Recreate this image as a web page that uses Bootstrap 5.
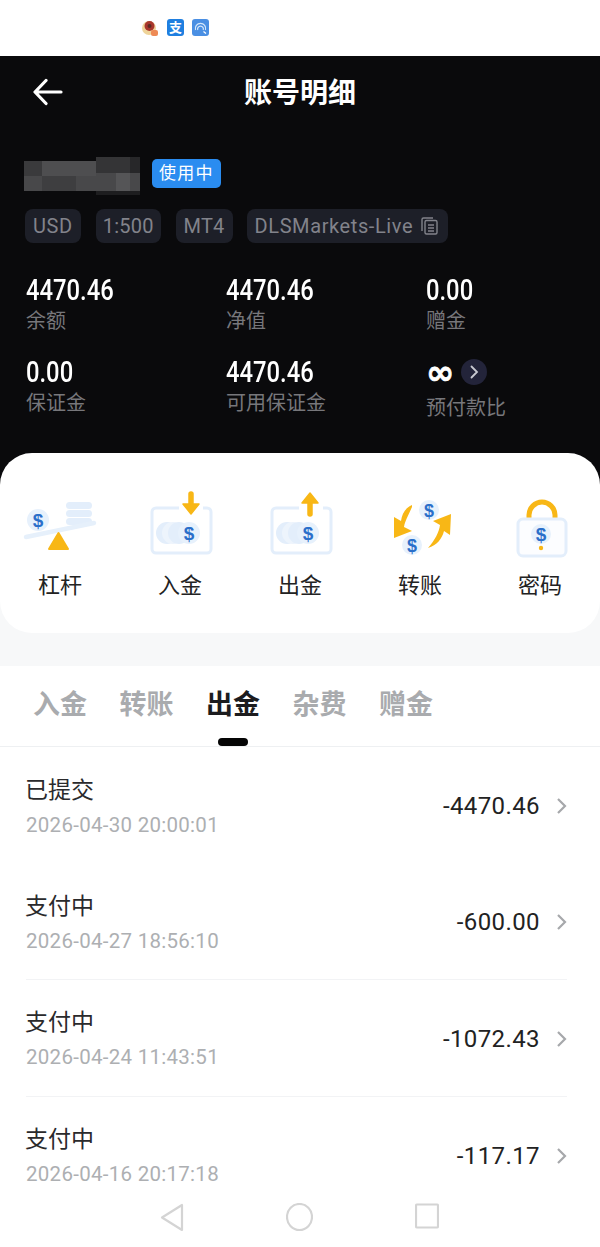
<!DOCTYPE html>
<html lang="zh-CN">
<head>
    <meta charset="UTF-8">
    <meta name="viewport" content="width=device-width, initial-scale=1.0">
    <title>账号明细</title>
    <link rel="stylesheet" href="https://cdn.jsdelivr.net/npm/bootstrap@5.3.0/dist/css/bootstrap.min.css">
    <style>
        html, body { height: 1247px; overflow: hidden; }
        body { font-family: Roboto, "Noto Sans CJK SC", sans-serif; background: #fff; color: #222; }
        svg { display: block; flex: none; }

        .status-strip { height: 56px; padding: 19px 0 0 142px; gap: 8px; }
        .alipay-box { width: 17px; height: 17px; border-radius: 3px; background: #1f7fe0; color: #fff; font-size: 13px; line-height: 17px; text-align: center; font-weight: 700; }

        .dark-top { height: 429px; background: #0a0a0c; color: #fff; }
        .title-bar { height: 72px; padding: 0 33px; }
        .title-bar h1 { font-size: 28px; font-weight: 700; margin: 4px 0 0; }
        .bar-side { width: 30px; }
        .name-line { height: 38px; margin: 29px 0 0 24px; gap: 12px; }
        .name-blur { filter: blur(.7px); }
        .state-tag { margin-top: 2px; height: 29px; padding: 0 7px; border-radius: 5px; background: #2a8cf0; font-size: 17px; line-height: 29px; letter-spacing: 1.2px; }
        .chip-line { margin: 14px 0 0 25px; gap: 15px; }
        .info-chip { height: 34px; padding: 0 7px; border-radius: 8px; background: #1d1f28; color: #82838b; font-size: 20px; line-height: 34px; letter-spacing: .2px; gap: 8px; }
        .chip-usd { padding: 0 8px; letter-spacing: .6px; }
        .chip-mt { padding: 0 8px; }
        .chip-wide { padding: 0 10px 0 8px; letter-spacing: .6px; margin-left: -1px; }
        .stat-grid { margin-top: 31px; row-gap: 20px; }
        .stat-cell { padding-left: 26px; }
        .stat-num { font-size: 29px; line-height: 32px; font-weight: 500; transform: scaleX(.82); transform-origin: left center; }
        .stat-name { color: #77777b; font-size: 20px; line-height: 30px; }
        .inf-mark { font-family: "DejaVu Sans", sans-serif; font-size: 34px; line-height: 32px; font-weight: 700; -webkit-text-stroke: .7px #fff; }
        .inf-btn { width: 26px; height: 26px; border-radius: 50%; background: #23243a; margin-left: 7px; }
        .mt-five { margin-top: 5px; }

        .panel-wrap { margin-top: -32px; position: relative; background: linear-gradient(transparent 50%, #f7f8f9 50%); }
        .action-panel { height: 180px; padding-top: 35px; border-radius: 32px; background: #fff; }
        .action-name { font-size: 22px; line-height: 30px; margin-top: 13px; color: #222; }
        .grey-gap { height: 33px; background: #f7f8f9; }

        .tab-line { height: 81px; padding: 22px 0 0 33px; gap: 32.5px; border-bottom: 1px solid #eef0f2; }
        .tab-item { position: relative; font-size: 27px; line-height: 34px; font-weight: 700; color: #a9abae; }
        .tab-on { color: #1c1c1e; }
        .tab-on::after { content: ""; position: absolute; left: 12px; top: 50px; width: 30px; height: 8px; border-radius: 4px; background: #050505; }

        .record-list { height: 439px; overflow: hidden; }
        .record-row { height: 116.5px; margin: 0 33px 0 26px; }
        .record-split { border-bottom: 1px solid #f2f3f5; }
        .record-left { padding-top: 4px; }
        .record-name { font-size: 23px; line-height: 30px; color: #2a2a2c; margin-left: -1px; }
        .record-time { font-size: 20.5px; line-height: 28px; margin-top: 5px; color: #adafb2; letter-spacing: .28px; }
        .record-right { padding-top: 2px; }
        .record-sum { font-size: 24px; font-weight: 400; color: #222; letter-spacing: .4px; margin-right: 16px; }

        .nav-strip { height: 60px; padding: 17px 1px 0 0; gap: 102px; }
    </style>
</head>
<body>
    <!-- 状态栏 -->
    <div class="status-strip d-flex align-items-start">
        <svg width="17" height="18" viewBox="0 0 17 18">
            <circle cx="7" cy="9" r="7" fill="#efd49a"/>
            <circle cx="7.5" cy="7" r="5" fill="#a8362c"/>
            <circle cx="7.5" cy="7" r="2" fill="#5a2a22"/>
            <rect x="9" y="11" width="7" height="6" rx="2" fill="#ee8a55"/>
        </svg>
        <div class="alipay-box">支</div>
        <svg width="17" height="17" viewBox="0 0 17 17">
            <rect width="17" height="17" rx="3" fill="#4a8fe3"/>
            <path d="M3.5 11a5.2 5.2 0 1 1 10 0M5.8 11a2.9 2.9 0 1 1 5.4 0" fill="none" stroke="#d5e7fa" stroke-width="1.2"/>
            <path d="M11.5 12.5l2.5 2" stroke="#fff" stroke-width="1.2"/>
        </svg>
    </div>

    <!-- 账号信息 -->
    <div class="dark-top">
        <div class="title-bar d-flex align-items-center">
            <div class="bar-side">
                <svg width="30" height="28" viewBox="0 0 30 28">
                    <path d="M13 2.5 2 14l11 11.5M2.5 14H28" fill="none" stroke="#fff" stroke-width="3.2" stroke-linecap="round" stroke-linejoin="round"/>
                </svg>
            </div>
            <h1 class="flex-grow-1 text-center">账号明细</h1>
            <div class="bar-side"></div>
        </div>

        <div class="name-line d-flex align-items-start">
            <!-- 打码的账号 -->
            <svg class="name-blur" width="116" height="38" viewBox="0 0 116 38">
                <rect y="4" width="116" height="30" fill="#48484a"/>
                <rect y="4" width="18" height="15" fill="#3a3a3c"/>
                <rect x="18" y="4" width="54" height="15" fill="#4e4e50"/>
                <rect x="18" y="19" width="34" height="15" fill="#3e3e40"/>
                <rect x="72" width="34" height="16" fill="#343436"/>
                <rect x="106" width="10" height="16" fill="#272729"/>
                <rect x="92" y="16" width="14" height="18" fill="#555557"/>
                <rect x="72" y="34" width="44" height="4" fill="#1d1d1f"/>
            </svg>
            <span class="state-tag">使用中</span>
        </div>

        <div class="chip-line d-flex">
            <span class="info-chip chip-usd">USD</span>
            <span class="info-chip">1:500</span>
            <span class="info-chip chip-mt">MT4</span>
            <span class="info-chip chip-wide d-flex align-items-center">DLSMarkets-Live
                <svg width="17" height="18" viewBox="0 0 17 18" fill="none" stroke="#82838b" stroke-width="1.4">
                    <path d="M1 14V2.5A1.5 1.5 0 0 1 2.500 1H12"/>
                    <rect x="4" y="3.500" width="12" height="13.500" rx="1.500"/>
                    <path d="M7 8h6M7 11h6M7 14h6"/>
                </svg>
            </span>
        </div>

        <div class="stat-grid row g-0">
            <div class="col-4 stat-cell"><div class="stat-num">4470.46</div><div class="stat-name">余额</div></div>
            <div class="col-4 stat-cell"><div class="stat-num">4470.46</div><div class="stat-name">净值</div></div>
            <div class="col-4 stat-cell"><div class="stat-num">0.00</div><div class="stat-name">赠金</div></div>
            <div class="col-4 stat-cell"><div class="stat-num">0.00</div><div class="stat-name">保证金</div></div>
            <div class="col-4 stat-cell"><div class="stat-num">4470.46</div><div class="stat-name">可用保证金</div></div>
            <div class="col-4 stat-cell">
                <div class="d-flex align-items-center">
                    <span class="inf-mark">∞</span>
                    <span class="inf-btn d-flex align-items-center justify-content-center">
                        <svg width="10" height="14" viewBox="0 0 10 14"><path d="M2.500 1.500 8 7l-5.500 5.500" fill="none" stroke="#c9cad2" stroke-width="1.800" stroke-linecap="round"/></svg>
                    </span>
                </div>
                <div class="stat-name mt-five">预付款比</div>
            </div>
        </div>
    </div>

    <!-- 功能入口 -->
    <div class="panel-wrap">
        <div class="action-panel row g-0 text-center">
            <div class="col">
                <svg class="mx-auto" width="90" height="70" viewBox="0 0 90 70">
                    <rect x="51" y="14" width="26" height="7" rx="3.500" fill="#e3eefb"/>
                    <rect x="51" y="22" width="26" height="7" rx="3.500" fill="#e3eefb"/>
                    <rect x="51" y="30" width="26" height="7" rx="3.500" fill="#e3eefb"/>
                    <path d="M11 49 79 35" stroke="#e6f0fb" stroke-width="4.500" stroke-linecap="round"/>
                    <circle cx="23" cy="32" r="11" fill="#e7f1fc"/>
                    <text x="23" y="39" text-anchor="middle" font-family="Liberation Sans" font-weight="700" font-size="19" fill="#2b6fca">$</text>
                    <path d="M43.500 45 34 61h19z" fill="#f8b716" stroke="#f8b716" stroke-width="2" stroke-linejoin="round"/>
                </svg>
                <div class="action-name">杠杆</div>
            </div>
            <div class="col">
                <svg class="mx-auto" width="90" height="70" viewBox="0 0 90 70">
                    <path d="M44 20H21a4 4 0 0 0-4 4v37a4 4 0 0 0 4 4h51a4 4 0 0 0 4-4V24a4 4 0 0 0-4-4h-4" fill="none" stroke="#e3eefb" stroke-width="3"/>
                    <circle cx="32" cy="45" r="11" fill="#e3eefb"/>
                    <circle cx="38" cy="45" r="11" fill="#edf4fc"/>
                    <circle cx="44" cy="45" r="11" fill="#e3eefb"/>
                    <circle cx="54" cy="45" r="11" fill="#e7f1fc"/>
                    <text x="54" y="52" text-anchor="middle" font-family="Liberation Sans" font-weight="700" font-size="19" fill="#2b6fca">$</text>
                    <path d="M56 6v12" stroke="#f8b716" stroke-width="5.500" stroke-linecap="round"/>
                    <path d="M48 16h16l-8 10z" fill="#f8b716" stroke="#f8b716" stroke-width="1.500" stroke-linejoin="round"/>
                </svg>
                <div class="action-name">入金</div>
            </div>
            <div class="col">
                <svg class="mx-auto" width="90" height="70" viewBox="0 0 90 70">
                    <path d="M44 20H21a4 4 0 0 0-4 4v37a4 4 0 0 0 4 4h51a4 4 0 0 0 4-4V24a4 4 0 0 0-4-4h-4" fill="none" stroke="#e3eefb" stroke-width="3"/>
                    <circle cx="32" cy="45" r="11" fill="#e3eefb"/>
                    <circle cx="38" cy="45" r="11" fill="#edf4fc"/>
                    <circle cx="44" cy="45" r="11" fill="#e3eefb"/>
                    <circle cx="53" cy="45" r="11" fill="#e7f1fc"/>
                    <text x="53" y="52" text-anchor="middle" font-family="Liberation Sans" font-weight="700" font-size="19" fill="#2b6fca">$</text>
                    <path d="M55 14v12" stroke="#f8b716" stroke-width="5.500" stroke-linecap="round"/>
                    <path d="M47 15h16l-8-10z" fill="#f8b716" stroke="#f8b716" stroke-width="1.500" stroke-linejoin="round"/>
                </svg>
                <div class="action-name">出金</div>
            </div>
            <div class="col">
                <svg class="mx-auto" width="90" height="70" viewBox="0 0 90 70">
                    <circle cx="54" cy="22" r="10" fill="#e7f1fc"/>
                    <text x="54" y="28.500" text-anchor="middle" font-family="Liberation Sans" font-weight="700" font-size="18" fill="#2b6fca">$</text>
                    <circle cx="37" cy="57" r="10" fill="#e7f1fc"/>
                    <text x="37" y="63.500" text-anchor="middle" font-family="Liberation Sans" font-weight="700" font-size="18" fill="#2b6fca">$</text>
                    <path d="M37 17C30 20 27 26 26 33l-7-4 0 21 18-7-8-4c1-6 4-11 8-20z" fill="#f8b716"/>
                    <path d="M53 60c9-3 14-9 16-17l6 4 1-21-18 7 7 4c-1 7-5 15-12 23z" fill="#f8b716"/>
                </svg>
                <div class="action-name">转账</div>
            </div>
            <div class="col">
                <svg class="mx-auto" width="90" height="70" viewBox="0 0 90 70">
                    <path d="M34 30v-3c0-7 6-13 13-13s13 6 13 13v3" fill="none" stroke="#f8b716" stroke-width="5"/>
                    <rect x="23" y="31" width="48" height="37" rx="5" fill="#fcfdff" stroke="#e3eefb" stroke-width="3"/>
                    <circle cx="46" cy="46" r="10" fill="#e7f1fc"/>
                    <text x="46" y="53" text-anchor="middle" font-family="Liberation Sans" font-weight="700" font-size="19" fill="#2b6fca">$</text>
                    <circle cx="46" cy="60" r="2.200" fill="#f8b716"/>
                </svg>
                <div class="action-name">密码</div>
            </div>
        </div>
    </div>

    <div class="grey-gap"></div>

    <!-- 分类 -->
    <div class="tab-line d-flex">
        <span class="tab-item">入金</span>
        <span class="tab-item">转账</span>
        <span class="tab-item tab-on">出金</span>
        <span class="tab-item">杂费</span>
        <span class="tab-item">赠金</span>
    </div>

    <!-- 出金记录 -->
    <div class="record-list">
        <div class="record-row d-flex align-items-center justify-content-between">
            <div class="record-left"><div class="record-name">已提交</div><div class="record-time">2026-04-30 20:00:01</div></div>
            <div class="record-right d-flex align-items-center">
                <span class="record-sum">-4470.46</span>
                <svg width="11" height="18" viewBox="0 0 11 18"><path d="M2 2l7 7-7 7" fill="none" stroke="#a6a8ab" stroke-width="2.200"/></svg>
            </div>
        </div>
        <div class="record-row record-split d-flex align-items-center justify-content-between">
            <div class="record-left"><div class="record-name">支付中</div><div class="record-time">2026-04-27 18:56:10</div></div>
            <div class="record-right d-flex align-items-center">
                <span class="record-sum">-600.00</span>
                <svg width="11" height="18" viewBox="0 0 11 18"><path d="M2 2l7 7-7 7" fill="none" stroke="#a6a8ab" stroke-width="2.200"/></svg>
            </div>
        </div>
        <div class="record-row record-split d-flex align-items-center justify-content-between">
            <div class="record-left"><div class="record-name">支付中</div><div class="record-time">2026-04-24 11:43:51</div></div>
            <div class="record-right d-flex align-items-center">
                <span class="record-sum">-1072.43</span>
                <svg width="11" height="18" viewBox="0 0 11 18"><path d="M2 2l7 7-7 7" fill="none" stroke="#a6a8ab" stroke-width="2.200"/></svg>
            </div>
        </div>
        <div class="record-row d-flex align-items-center justify-content-between">
            <div class="record-left"><div class="record-name">支付中</div><div class="record-time">2026-04-16 20:17:18</div></div>
            <div class="record-right d-flex align-items-center">
                <span class="record-sum">-117.17</span>
                <svg width="11" height="18" viewBox="0 0 11 18"><path d="M2 2l7 7-7 7" fill="none" stroke="#a6a8ab" stroke-width="2.200"/></svg>
            </div>
        </div>
    </div>

    <!-- 系统导航 -->
    <div class="nav-strip d-flex justify-content-center align-items-start">
        <svg width="24" height="29" viewBox="0 0 24 29"><path d="M22 2v25L2 14.500z" fill="none" stroke="#d4d4d4" stroke-width="2.200" stroke-linejoin="round"/></svg>
        <svg width="27" height="29" viewBox="0 0 27 29"><ellipse cx="13.500" cy="14" rx="12.500" ry="13" fill="none" stroke="#d4d4d4" stroke-width="2.200"/></svg>
        <svg width="24" height="26" viewBox="0 0 24 26"><rect x="1" y="1.500" width="22" height="23" rx="1" fill="none" stroke="#d4d4d4" stroke-width="2.200"/></svg>
    </div>

    <script src="https://cdn.jsdelivr.net/npm/bootstrap@5.3.0/dist/js/bootstrap.bundle.min.js"></script>
</body>
</html>
